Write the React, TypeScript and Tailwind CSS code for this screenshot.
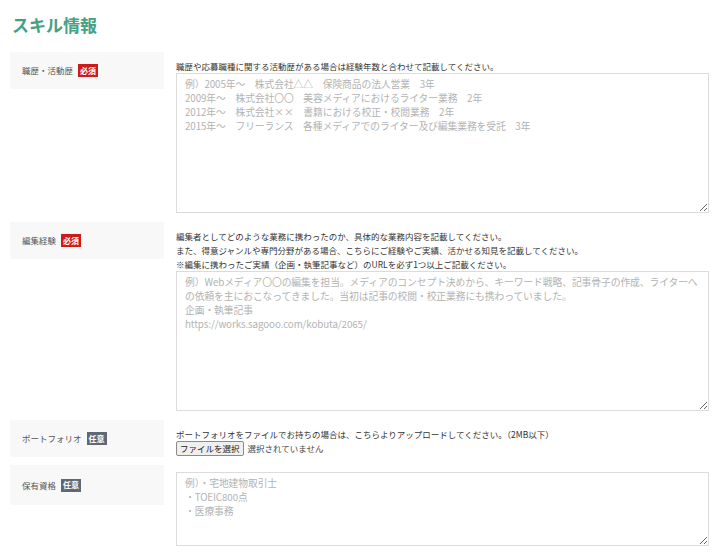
import React from 'react';

type BadgeProps = { required?: boolean };

const Badge: React.FC<BadgeProps> = ({ required }) => (
  <span
    className={`ml-[5px] inline-flex h-[13px] items-center px-[2px] text-[8px] leading-none font-bold text-white ${
      required ? 'bg-[#cc1b1b]' : 'bg-[#5e6977]'
    }`}
  >
    {required ? '必須' : '任意'}
  </span>
);

const Label: React.FC<{ text: string; required?: boolean; tall?: boolean }> = ({ text, required, tall }) => (
  <div
    className={`flex w-[154px] shrink-0 items-center bg-[#f8f8f8] pl-[12px] ${tall ? 'h-[40px]' : 'h-[37px]'}`}
  >
    <span className="text-[8.5px] leading-none text-[#555]">{text}</span>
    <Badge required={required} />
  </div>
);

const Area: React.FC<{ placeholder: string; h: string }> = ({ placeholder, h }) => (
  <textarea
    placeholder={placeholder}
    className={`block w-full ${h} border border-[#dcdcdc] bg-white pt-[3px] pr-0 pl-[8px] text-[9.8px] leading-[14px] tracking-[-0.1px] text-[#333] outline-none placeholder:text-[#b3b3b3]`}
  />
);

const App: React.FC = () => {
  return (
    <div className="min-h-[553px] bg-white px-[10px] [font-family:'Noto_Sans_CJK_JP','Noto_Sans',sans-serif] text-[#333]">
      <h1 className="pt-[13px] pl-[2px] text-[17px] leading-[24px] font-bold text-[#45a083]">スキル情報</h1>

      <div className="mt-[15px] flex flex-col">
        {/* 職歴 */}
        <div className="flex gap-[12px]">
          <Label text="職歴・活動歴" required />
          <div className="flex-1 pt-[7px] pr-[1px]">
            <p className="text-[8.5px] leading-[14px]">
              職歴や応募職種に関する活動歴がある場合は経験年数と合わせて記載してください。
            </p>
            <Area
              h="h-[140px]"
              placeholder={
                '例）2005年～　株式会社△△　保険商品の法人営業　3年\n2009年～　株式会社〇〇　美容メディアにおけるライター業務　2年\n2012年～　株式会社××　書籍における校正・校閲業務　2年\n2015年～　フリーランス　各種メディアでのライター及び編集業務を受託　3年'
              }
            />
          </div>
        </div>

        {/* 編集経験 */}
        <div className="mt-[9px] flex gap-[12px]">
          <Label text="編集経験" required />
          <div className="flex-1 pt-[7px] pr-[1px]">
            <p className="text-[8.5px] leading-[14px]">
              編集者としてどのような業務に携わったのか、具体的な業務内容を記載してください。
            </p>
            <p className="text-[8.5px] leading-[14px]">
              また、得意ジャンルや専門分野がある場合、こちらにご経験やご実績、活かせる知見を記載してください。
            </p>
            <p className="text-[8.5px] leading-[14px]">
              ※編集に携わったご実績（企画・執筆記事など）のURLを必ず1つ以上ご記載ください。
            </p>
            <Area
              h="h-[140px]"
              placeholder={
                '例）Webメディア〇〇の編集を担当。メディアのコンセプト決めから、キーワード戦略、記事骨子の作成、ライターへ\nの依頼を主におこなってきました。当初は記事の校閲・校正業務にも携わっていました。\n企画・執筆記事\nhttps://works.sagooo.com/kobuta/2065/'
              }
            />
          </div>
        </div>

        {/* ポートフォリオ */}
        <div className="mt-[9px] flex gap-[12px]">
          <Label text="ポートフォリオ" />
          <div className="flex-1 pt-[7px]">
            <p className="text-[8.5px] leading-[14px]">
              ポートフォリオをファイルでお持ちの場合は、こちらよりアップロードしてください。（2MB以下）
            </p>
            <div className="flex items-center gap-[4px]">
              <button className="h-[15px] rounded-[2px] border border-[#8a8a8a] bg-[#efefef] px-[3px] text-[8.5px] leading-none text-[#222]">
                ファイルを選択
              </button>
              <span className="text-[8.5px] leading-none text-[#444]">選択されていません</span>
            </div>
          </div>
        </div>

        {/* 保有資格 */}
        <div className="mt-[8px] flex gap-[12px]">
          <Label text="保有資格" tall />
          <div className="flex-1 pt-[7px] pr-[1px]">
            <Area h="h-[74px]" placeholder={'例）・宅地建物取引士\n・TOEIC800点\n・医療事務'} />
          </div>
        </div>
      </div>
    </div>
  );
};

export default App;
